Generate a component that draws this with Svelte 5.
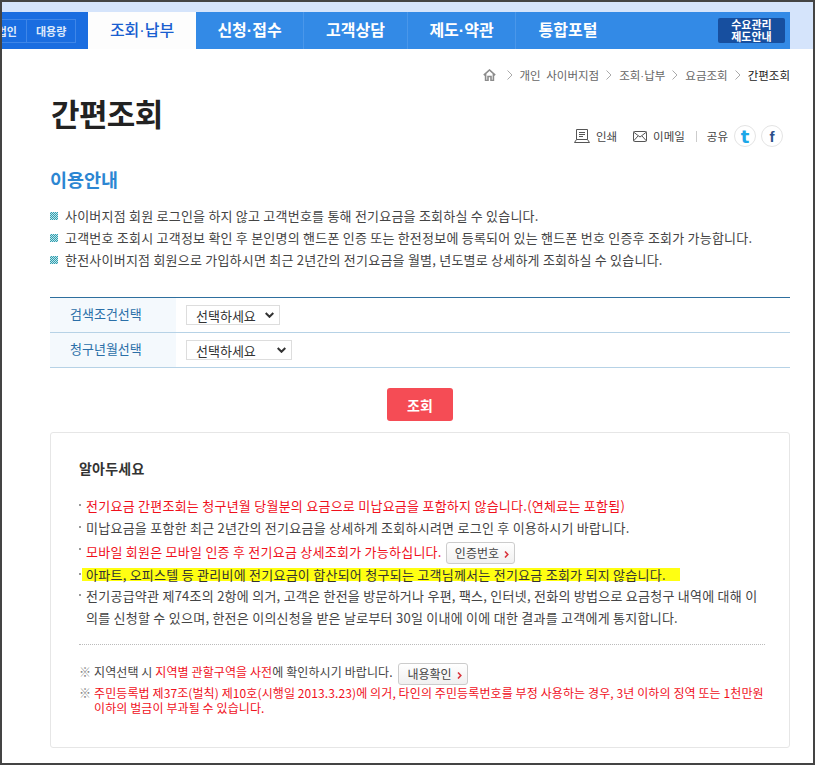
<script>
	const tabs = ['신청·접수', '고객상담', '제도·약관', '통합포털'];
	const crumbs = ['개인 사이버지점', '조회·납부', '요금조회'];
	const guide = [
		'사이버지점 회원 로그인을 하지 않고 고객번호를 통해 전기요금을 조회하실 수 있습니다.',
		'고객번호 조회시 고객정보 확인 후 본인명의 핸드폰 인증 또는 한전정보에 등록되어 있는 핸드폰 번호 인증후 조회가 가능합니다.',
		'한전사이버지점 회원으로 가입하시면 최근 2년간의 전기요금을 월별, 년도별로 상세하게 조회하실 수 있습니다.'
	];
</script>

{#snippet label(text)}
	{#each text.split('·') as part, i}{#if i}<span class="dot">·</span>{/if}{part}{/each}
{/snippet}

{#snippet arrow()}
	<svg class="arrow" width="5" height="7" viewBox="0 0 5 7" fill="none" stroke="#d9343c" stroke-width="1.6"><path d="M1 0.5L3.8 3.5L1 6.5" /></svg>
{/snippet}

<div class="frame">
	<div class="top-strip">
		<nav class="gnb">
			<div class="side-tabs">
				<span class="side-item cut">법인</span>
				<span class="side-item">대용량</span>
			</div>
			<a class="tab active" href="#a">{@render label('조회·납부')}</a>
			{#each tabs as tab}
				<a class="tab" href="#a">{@render label(tab)}</a>
			{/each}
			<a class="demand" href="#a">수요관리<br />제도안내</a>
		</nav>
	</div>

	<main class="content">
		<div class="breadcrumb">
			<svg class="home" width="13" height="12" viewBox="0 0 13 12" fill="none" stroke="#8c8c8c" stroke-width="1.6">
				<path d="M0.8 6.2L6.5 1L12.2 6.2M2.6 5V11.5H5V7.5H8V11.5H10.4V5" />
			</svg>
			{#each crumbs as crumb}
				<svg class="chev" width="6" height="10" viewBox="0 0 6 10" fill="none" stroke="#aaa"><path d="M0.5 0.5L5 5L0.5 9.5" /></svg>
				<span class="crumb">{@render label(crumb)}</span>
			{/each}
			<svg class="chev" width="6" height="10" viewBox="0 0 6 10" fill="none" stroke="#aaa"><path d="M0.5 0.5L5 5L0.5 9.5" /></svg>
			<span class="crumb current">간편조회</span>
		</div>

		<div class="title-row">
			<h1>간편조회</h1>
			<div class="tools">
				<svg class="print" width="16" height="14" viewBox="0 0 16 14" fill="none" stroke="#555">
					<path d="M2.5 0.5H13.5V10.5H2.5ZM5 3.5H11M5 5.5H11M5 7.5H9M0.5 13.5L2.5 10.5M15.5 13.5L13.5 10.5M0.5 13.5H15.5" />
				</svg>
				<span class="tool-label">인쇄</span>
				<svg class="mail" width="14" height="11" viewBox="0 0 14 11" fill="none" stroke="#555">
					<rect x="0.5" y="0.5" width="13" height="10" rx="1" />
					<path d="M0.5 1L7 6L13.5 1M0.5 10L5 5M13.5 10L9 5" />
				</svg>
				<span class="tool-label">이메일</span>
				<i class="tool-sep"></i>
				<span class="tool-label">공유</span>
				<span class="sns tw">t</span>
				<span class="sns fb">f</span>
			</div>
		</div>

		<h2>이용안내</h2>
		<ul class="guide">
			{#each guide as line}
				<li>{line}</li>
			{/each}
		</ul>

		<div class="search-table">
			<div class="row">
				<div class="th">검색조건선택</div>
				<div class="td"><span class="select s1">선택하세요<svg width="9" height="6" viewBox="0 0 9 6" fill="none" stroke="#333" stroke-width="2"><path d="M0.7 1L4.5 4.8L8.3 1" /></svg></span></div>
			</div>
			<div class="row">
				<div class="th">청구년월선택</div>
				<div class="td"><span class="select s2">선택하세요<svg width="9" height="6" viewBox="0 0 9 6" fill="none" stroke="#333" stroke-width="2"><path d="M0.7 1L4.5 4.8L8.3 1" /></svg></span></div>
			</div>
		</div>

		<div class="btn-row"><button class="btn-search">조회</button></div>

		<section class="notice">
			<h3>알아두세요</h3>
			<ul class="dots">
				<li class="red">전기요금 간편조회는 청구년월 당월분의 요금으로 미납요금을 포함하지 않습니다.(연체료는 포함됨)</li>
				<li>미납요금을 포함한 최근 2년간의 전기요금을 상세하게 조회하시려면 로그인 후 이용하시기 바랍니다.</li>
				<li class="red tall">모바일 회원은 모바일 인증 후 전기요금 상세조회가 가능하십니다. <button class="mini">인증번호{@render arrow()}</button></li>
				<li class="mark"><span>아파트, 오피스텔 등 관리비에 전기요금이 합산되어 청구되는 고객님께서는 전기요금 조회가 되지 않습니다.</span></li>
				<li>전기공급약관 제74조의 2항에 의거, 고객은 한전을 방문하거나 우편, 팩스, 인터넷, 전화의 방법으로 요금청구 내역에 대해 이의를 신청할 수 있으며, 한전은 이의신청을 받은 날로부터 30일 이내에 이에 대한 결과를 고객에게 통지합니다.</li>
			</ul>
			<ul class="refs">
				<li>지역선택 시 <em>지역별 관할구역을 사전</em>에 확인하시기 바랍니다. <button class="mini">내용확인{@render arrow()}</button></li>
				<li class="red">주민등록법 제37조(벌칙) 제10호(시행일 2013.3.23)에 의거, 타인의 주민등록번호를 부정 사용하는 경우, 3년 이하의 징역 또는 1천만원 이하의 벌금이 부과될 수 있습니다.</li>
			</ul>
		</section>
	</main>
</div>

<style>
	:global(body) { margin: 0; background: #fff; }
	.frame { width: 815px; height: 765px; box-sizing: border-box; border: 2px solid #444; overflow: hidden; font-family: "Noto Sans CJK KR", "Noto Sans", sans-serif; font-size: 13px; letter-spacing: 0.22px; color: #444; background: #fff; }
	.top-strip { background: #d5e4fb; padding-top: 10px; height: 37px; }
	.gnb { display: flex; align-items: stretch; width: 788px; height: 37px; background: #338ae6; letter-spacing: 0; }
	.side-tabs { width: 86px; flex-shrink: 0; background: #1a6de0; display: flex; align-items: center; justify-content: flex-end; padding-right: 12px; box-sizing: border-box; overflow: hidden; }
	.side-item { flex-shrink: 0; height: 24px; line-height: 23px; border: 1px solid #3f86e8; color: #dfeafb; font-size: 11px; font-weight: 700; padding: 0 9px; box-sizing: border-box; width: 50px; text-align: center; white-space: nowrap; }
	.side-item.cut { border-left: 0; border-right: 0; width: auto; padding: 0 9px 0 0; }
	.tab { width: 104px; flex-shrink: 0; line-height: 35px; text-align: center; color: #fff; font-size: 16px; font-weight: 700; text-decoration: none; border-right: 1px solid #4a97ea; box-sizing: border-box; }
	.tab:nth-of-type(2), .tab:nth-of-type(4) { width: 108px; }
	.tab.active { width: 108px; background: #fdfdfd; color: #1a5fd0; font-weight: 500; border: 0; }
	.tab:nth-of-type(5) { border-right: 0; }
	.dot { font-family: "Liberation Sans", sans-serif; }
	.demand { margin: 6px 5px 6px auto; width: 67px; background: #174f9f; color: #fff; font-size: 11px; font-weight: 700; line-height: 12px; text-align: center; border-radius: 2px; text-decoration: none; }
	.content { padding: 0 23px 0 48px; }
	.breadcrumb { display: flex; justify-content: flex-end; align-items: center; gap: 7px; height: 20px; margin-top: 16px; color: #666; }
	.crumb { font-size: 11.5px; word-spacing: 3px; letter-spacing: 0; }
	.home { margin-right: 4px; }
	.current { color: #222; }
	.title-row { display: flex; justify-content: space-between; align-items: flex-start; height: 65px; margin-top: 4px; }
	h1 { margin: 0 0 0 1px; font-size: 31px; line-height: 48px; font-weight: 700; color: #222; letter-spacing: -0.6px; }
	.tools { display: flex; align-items: center; margin: 36px 7px 0 0; color: #444; font-size: 11.5px; letter-spacing: 0; }
	.print { margin-right: 6px; }
	.mail { margin: 0 6px 0 16px; }
	.tool-sep { width: 1px; height: 11px; background: #ccc; margin: 0 10px 0 11px; }
	.sns { width: 22px; height: 22px; box-sizing: border-box; border: 1px solid #e4e4e4; border-radius: 50%; display: flex; align-items: center; justify-content: center; font: 700 15px "Liberation Sans", sans-serif; }
	.tw { color: #1da7e8; margin-left: 6px; font-size: 18px; font-family: "DejaVu Sans", sans-serif; }
	.fb { color: #2b4f8a; margin-left: 5px; }
	h2 { margin: 12px 0 0; font-size: 18.5px; line-height: 26px; font-weight: 700; color: #2c86d2; letter-spacing: 0; }
	.guide { list-style: none; margin: 13px 0 0; padding: 0; }
	.guide li { height: 22px; line-height: 22px; padding-left: 15px; position: relative; white-space: nowrap; color: #444; }
	.guide li::before { content: ''; position: absolute; left: 0; top: 7px; width: 8px; height: 8px; background: repeating-conic-gradient(#2f9fb0 0 25%, #bfe4ea 0 50%) 0 0 / 2px 2px; }
	.search-table { margin-top: 26px; border-top: 1px solid #2e6f9e; letter-spacing: 0; }
	.row { display: flex; height: 35px; box-sizing: border-box; border-bottom: 1px solid #b6d2e6; }
	.th { width: 126px; background: #f4f9fd; color: #2a6fa8; line-height: 32px; padding-left: 20px; box-sizing: border-box; }
	.td { padding: 7px 0 0 10px; }
	.select { display: flex; align-items: center; justify-content: space-between; height: 20px; box-sizing: border-box; border: 1px solid #ddd; padding: 0 5px 0 9px; color: #333; }
	.s1 { width: 94px; }
	.s2 { width: 106px; }
	.btn-row { display: flex; justify-content: center; margin-top: 20px; }
	button { font-family: inherit; }
	.btn-search { width: 66px; height: 33px; background: #f54c55; color: #fff; border: 0; border-radius: 3px; font-size: 14px; font-weight: 700; }
	.notice { margin-top: 11px; height: 316px; box-sizing: border-box; border: 1px solid #e6e6e6; border-radius: 3px; padding: 25px 24px 0 28px; }
	h3 { margin: 0; font-size: 14px; line-height: 20px; font-weight: 700; color: #333; }
	.dots { list-style: none; margin: 17px 0 0; padding: 0 0 15px; border-bottom: 1px dotted #bbb; word-break: break-all; letter-spacing: 0.25px; }
	.dots li { padding: 0 2px 0 7px; line-height: 22px; position: relative; color: #444; }
	.dots li::before { content: ''; position: absolute; left: 0; top: 9px; width: 2px; height: 2px; background: #999; }
	.dots li.red { color: #f0101c; }
	.dots li.tall { padding-top: 2px; }
	.refs em { color: #f0101c; font-style: normal; }
	.dots li.mark { line-height: 21px; }
	.dots li.mark span { background: linear-gradient(transparent 3px, #ffff12 3px, #ffff12 16px, transparent 16px); color: #333; margin-left: -4px; padding: 0 14px 0 4px; }
	.mini { height: 22px; padding: 0 5px 0 8px; background: linear-gradient(#fff, #f0f0f0); border: 1px solid #ccc; border-radius: 3px; color: #444; font-size: 12px; letter-spacing: 0; vertical-align: middle; line-height: 18px; margin-left: 1px; }
	.arrow { margin-left: 5px; }
	.refs { list-style: none; margin: 19px 0 0; padding: 0; word-break: break-all; }
	.refs li { padding-left: 15px; line-height: 16px; position: relative; font-size: 12px; color: #444; letter-spacing: 0.1px; }
	.refs li.red { color: #f0101c; margin-top: 3px; line-height: 15px; }
	.refs .mini { margin: -3px 0 -3px 3px; }
	.refs li::before { content: '※'; position: absolute; left: 0; top: 0; color: #888; }
</style>
